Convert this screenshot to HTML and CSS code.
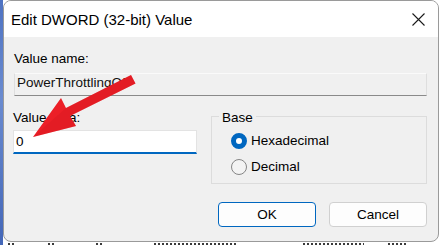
FILE: index.html
```html
<!DOCTYPE html>
<html lang="en">
<head>
    <meta charset="UTF-8">
    <title>Edit DWORD (32-bit) Value</title>
    <link rel="stylesheet" href="styles.css">
</head>
<body>

    <div class="screen">
        <!-- strip of the regedit window behind the dialog -->
        <div class="edge"></div>

        <div class="stack">
            <div class="dialog">
                <div class="titlebar">
                    <span class="title">Edit DWORD (32-bit) Value</span>
                    <svg class="close" width="13" height="13" viewBox="0 0 13 13">
                        <path d="M0.5 0.5 L12.5 12.5 M12.5 0.5 L0.5 12.5" stroke="#1b1b1b" stroke-width="1.1" fill="none"/>
                    </svg>
                </div>

                <div class="content">
                    <div class="label">Value name:</div>
                    <div class="field readonly">PowerThrottlingOff</div>

                    <div class="row">
                        <div class="data-col">
                            <div class="label">Value data:</div>
                            <div class="field edit">0</div>
                        </div>

                        <div class="group">
                            <div class="group-title">Base</div>
                            <div class="radios">
                                <label class="radio"><span class="dot checked"></span>Hexadecimal</label>
                                <label class="radio"><span class="dot"></span>Decimal</label>
                            </div>
                        </div>
                    </div>

                    <div class="buttons">
                        <button class="btn default">OK</button>
                        <button class="btn">Cancel</button>
                    </div>
                </div>
            </div>

            <!-- tops of the registry rows peeking out under the dialog -->
            <div class="behind">
                <span class="frag" style="margin-left: 5px; width: 8px"></span>
                <span class="frag" style="margin-left: 32px; width: 6px"></span>
                <span class="frag" style="margin-left: 42px; width: 8px"></span>
                <span class="frag" style="margin-left: 50px; width: 84px"></span>
                <span class="frag" style="margin-left: 65px; width: 61px"></span>
                <span class="frag" style="margin-left: 24px; width: 18px"></span>
            </div>
        </div>
    </div>

    <!-- red annotation arrow drawn over the dialog -->
    <svg class="arrow" width="440" height="245" viewBox="0 0 440 245">
        <polygon points="33,137 61,98 66,108 131,75 135.5,83.5 70,116 76,126" fill="#ec1f27"/>
        <polygon points="33,137 66,108 131,75 135.5,83.5 70,116 76,126" fill="#c8141b" opacity="0.25"/>
    </svg>

</body>
</html>
```

FILE: styles.css
```css
    body {
        margin: 0;
        width: 440px;
        height: 245px;
        overflow: hidden;
        background-color: #ffffff;
        font-family: 'Liberation Sans', Arial, sans-serif;
        font-size: 13.5px;
        color: #000000;
        position: relative;
    }

    .screen {
        display: flex;
        height: 245px;
    }

    .edge {
        width: 3px;
        background: linear-gradient(#4f73c2, #6a8bd0 40%, #4467b8);
    }

    .stack {
        width: 437px;
        display: flex;
        flex-direction: column;
    }

    .dialog {
        width: 436px;
        flex-shrink: 0;
        box-sizing: border-box;
        border: 1px solid #9a9a9a;
        border-radius: 8px;
        overflow: hidden;
        background-color: #f0f0f0;
    }

    .titlebar {
        height: 36px;
        background-color: #ffffff;
        display: flex;
        align-items: center;
        justify-content: space-between;
        padding: 1px 13px 0 7px;
        box-sizing: border-box;
    }

    .title {
        font-size: 15px;
        line-height: 20px;
    }

    .close {
        display: block;
    }

    .content {
        padding: 14px 11px 14px 10px;
    }

    .label {
        line-height: 16px;
    }

    .field {
        box-sizing: border-box;
        line-height: 16px;
    }

    .readonly {
        margin-top: 6px;
        height: 23px;
        padding: 1px 2px 4px;
        background-color: #f0f0f0;
        border: 1px solid #dedede;
        border-top-color: #fafafa;
        border-bottom-color: #8a8a8a;
        color: #111111;
    }

    .row {
        display: flex;
        align-items: flex-start;
        gap: 14px;
        margin-top: 14px;
    }

    .data-col {
        width: 184px;
        margin-left: -1px;
    }

    .edit {
        margin-top: 4px;
        height: 24px;
        padding: 3px 2px 2px;
        background-color: #ffffff;
        border: 1px solid #e3e3e3;
        border-bottom: 2px solid #0067c0;
    }

    .group {
        flex: 1;
        margin-top: 6px;
        border: 1px solid #dcdcdc;
    }

    .group-title {
        width: fit-content;
        margin: -7px 0 0 7px;
        padding: 0 3px;
        line-height: 16px;
        background-color: #f0f0f0;
    }

    .radios {
        display: flex;
        flex-direction: column;
        gap: 10px;
        padding: 7px 0 8px 19px;
    }

    .radio {
        display: flex;
        align-items: center;
        gap: 4px;
        line-height: 16px;
    }

    .dot {
        width: 16px;
        height: 16px;
        box-sizing: border-box;
        border-radius: 50%;
        border: 1px solid #858585;
        background-color: #f3f3f3;
    }

    .dot.checked {
        border: 5px solid #0067c0;
        background-color: #ffffff;
    }

    .buttons {
        display: flex;
        justify-content: flex-end;
        gap: 13px;
        margin-top: 18px;
    }

    .btn {
        width: 98px;
        height: 25px;
        font-family: 'Liberation Sans', Arial, sans-serif;
        font-size: 13.5px;
        color: #000000;
        background-color: #fdfdfd;
        border: 1px solid #d0d0d0;
        border-radius: 4px;
        padding: 0;
    }

    .btn.default {
        border-color: #0067c0;
    }

    .behind {
        display: flex;
        padding-top: 1px;
    }

    .frag {
        height: 2px;
        flex-shrink: 0;
        background: repeating-linear-gradient(90deg, #3a3a3a 0 2px, transparent 2px 4px);
    }

    .arrow {
        position: absolute;
        left: 0;
        top: 0;
        pointer-events: none;
    }
```
